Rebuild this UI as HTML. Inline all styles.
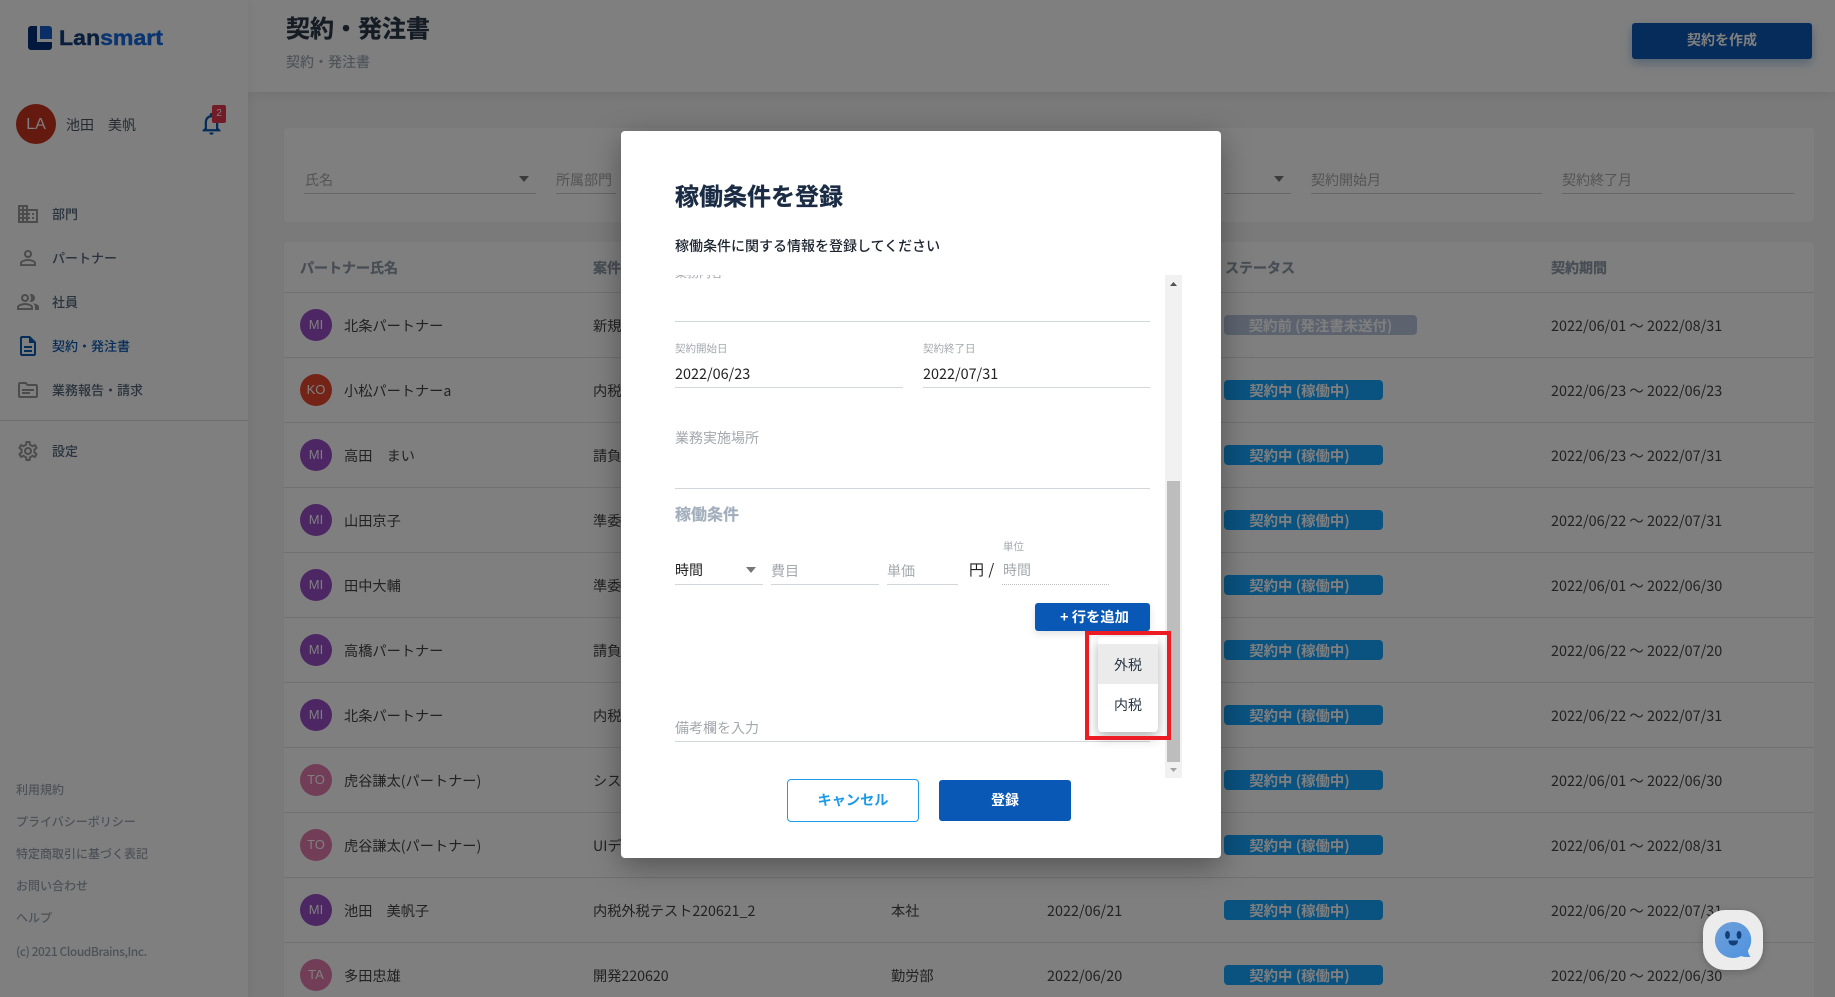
<!DOCTYPE html>
<html lang="ja"><head><meta charset="utf-8"><title>契約・発注書</title>
<style>
*{box-sizing:border-box}
html,body{margin:0;padding:0;width:1835px;height:997px;overflow:hidden}
body{position:relative;background:#f5f5f5;font-family:"Liberation Sans","Noto Sans CJK JP",sans-serif;color:#444}
#w{position:absolute;left:0;top:0;width:1835px;height:997px;overflow:hidden}
.t{position:absolute;white-space:nowrap;line-height:20px;font-family:"Noto Sans CJK JP","Liberation Sans",sans-serif;font-size:14px}
.b{font-weight:700}
.box{position:absolute}
.line{position:absolute;height:1px}
svg{position:absolute;display:block}
.side{position:absolute;left:0;top:0;width:248px;height:997px;background:#fff;box-shadow:0 0 12px rgba(0,0,0,.08)}
.head{position:absolute;left:248px;top:0;width:1587px;height:92px;background:#fff;box-shadow:0 2px 12px rgba(0,0,0,.08)}
.card{position:absolute;left:284px;width:1530px;background:#fff;border-radius:4px}
.m{color:#55667a;font-size:13px;font-weight:500;left:52px}
.f{color:#9ca5b1;font-size:12px;font-weight:500;left:16px}
.fl{color:#a8a8a8}
.av{position:absolute;left:300px;width:32px;height:32px;border-radius:50%;color:#fff;font-size:13px;line-height:32px;text-align:center;font-family:"Liberation Sans",sans-serif}
.mi{background:#9a4cc8}.to{background:#e47cae}
.n{left:344px;color:#444;font-size:14.200px}
.c{left:593px;color:#444;font-size:14.200px}
.p{left:1551px;color:#444;font-size:14.400px}
.s{position:absolute;left:1224px;width:159px;height:20px;border-radius:4px;background:#14a4ff;color:#fff;font-weight:700;font-size:14.400px;line-height:21px;text-align:center;padding-right:8px;font-family:"Noto Sans CJK JP",sans-serif}
.ov{position:absolute;left:0;top:0;width:1835px;height:997px;background:rgba(0,0,0,.5)}
.modal{position:absolute;left:621px;top:131px;width:600px;height:727px;background:#fff;border-radius:4px;box-shadow:0 8px 30px rgba(0,0,0,.35)}
.ul{position:absolute;height:1px;background:#d2d7dc}
.g{color:#a4a8ad}
.th{color:#8f9ba8;-webkit-text-stroke:.25px #8f9ba8}
</style></head><body><div id="w">

<div class="head"></div>
<div class="side"></div>

<!-- logo -->
<svg style="left:28px;top:26px" width="24" height="24" viewBox="0 0 24 24"><path d="M3 0H9V16H24V21a3 3 0 0 1-3 3H3a3 3 0 0 1-3-3V3a3 3 0 0 1 3-3z" fill="#04307a"/><path d="M12 0H21a3 3 0 0 1 3 3V13H12z" fill="#145ecc"/></svg>
<div style="position:absolute;left:59px;top:26px;font:700 21px/26px 'Liberation Sans',sans-serif;color:#143e7a;-webkit-text-stroke:.4px #143e7a;transform:scaleX(1.1);transform-origin:0 0;white-space:nowrap">Lan<span style="color:#146ae0;-webkit-text-stroke:.4px #146ae0">smart</span></div>

<!-- user -->
<div class="box" style="left:16px;top:104px;width:40px;height:40px;border-radius:50%;background:#ca3420;color:#fff;text-align:center;line-height:42px;font-size:16px">LA</div>
<div class="t" style="left:66px;top:115px;color:#4a5563">池田　美帆</div>
<svg style="left:198px;top:110px" width="27" height="27" viewBox="0 0 24 24"><path d="M12 22c1.1 0 2-.9 2-2h-4c0 1.1.9 2 2 2zm6-6v-5c0-3.07-1.63-5.64-4.5-6.32V4c0-.83-.67-1.5-1.5-1.5s-1.5.67-1.5 1.5v.68C7.64 5.36 6 7.92 6 11v5l-2 2v1h16v-1l-2-2zm-2 1H8v-6c0-2.48 1.51-4.5 4-4.5s4 2.02 4 4.5v6z" fill="#0b5ab5"/></svg>
<div class="box" style="left:212px;top:105px;width:14px;height:18px;border-radius:2px;background:#e63950;color:#fff;font-size:10px;line-height:18px;text-align:center">2</div>

<!-- menu -->
<svg style="left:16px;top:202px" width="24" height="24" viewBox="0 0 24 24"><path fill="#999" d="M12 7V3H2v18h20V7H12zM6 19H4v-2h2v2zm0-4H4v-2h2v2zm0-4H4V9h2v2zm0-4H4V5h2v2zm4 12H8v-2h2v2zm0-4H8v-2h2v2zm0-4H8V9h2v2zm0-4H8V5h2v2zm10 12h-8v-2h2v-2h-2v-2h2v-2h-2V9h8v10zm-2-8h-2v2h2v-2zm0 4h-2v2h2v-2z"/></svg>
<div class="t m" style="top:204px">部門</div>
<svg style="left:16px;top:246px" width="24" height="24" viewBox="0 0 24 24"><path fill="#999" d="M12 5.900c1.160 0 2.100.940 2.100 2.100s-.940 2.100-2.100 2.100S9.900 9.160 9.900 8s.940-2.100 2.100-2.100m0 9c2.970 0 6.100 1.460 6.100 2.100v1.100H5.900V17c0-.640 3.130-2.100 6.100-2.100M12 4C9.790 4 8 5.790 8 8s1.790 4 4 4 4-1.790 4-4-1.790-4-4-4zm0 9c-2.670 0-8 1.340-8 4v3h16v-3c0-2.660-5.330-4-8-4z"/></svg>
<div class="t m" style="top:248px">パートナー</div>
<svg style="left:16px;top:290px" width="24" height="24" viewBox="0 0 24 24"><path fill="#999" d="M16.67 13.13C18.04 14.06 19 15.32 19 17v3h4v-3c0-2.18-3.57-3.47-6.33-3.87zM15 12c2.21 0 4-1.79 4-4s-1.79-4-4-4c-.47 0-.91.1-1.33.24C14.5 5.27 15 6.58 15 8s-.5 2.73-1.33 3.76c.42.14.86.24 1.33.24zM9 12c2.21 0 4-1.79 4-4s-1.79-4-4-4-4 1.79-4 4 1.79 4 4 4zm0-6c1.1 0 2 .9 2 2s-.9 2-2 2-2-.9-2-2 .9-2 2-2zM9 13c-2.67 0-8 1.34-8 4v3h16v-3c0-2.66-5.33-4-8-4zm6 5H3v-.99C3.2 16.29 6.3 15 9 15s5.8 1.29 6 2v1z"/></svg>
<div class="t m" style="top:292px">社員</div>
<svg style="left:16px;top:334px" width="24" height="24" viewBox="0 0 24 24"><path fill="#0b5ab5" d="M8 16h8v2H8zm0-4h8v2H8zm6-10H6c-1.1 0-2 .9-2 2v16c0 1.1.89 2 1.99 2H18c1.1 0 2-.9 2-2V8l-6-6zm4 18H6V4h7v5h5v11z"/></svg>
<div class="t m" style="top:336px;color:#0b5ab5">契約・発注書</div>
<svg style="left:16px;top:378px" width="24" height="24" viewBox="0 0 24 24"><path fill="#999" d="M20 6h-8l-2-2H4c-1.1 0-1.99.9-1.99 2L2 18c0 1.1.9 2 2 2h16c1.1 0 2-.9 2-2V8c0-1.1-.9-2-2-2zm0 12H4V6h5.17l2 2H20v10zM6 11h12v2H6zm0 3h8v2H6z"/></svg>
<div class="t m" style="top:380px">業務報告・請求</div>
<div class="line" style="left:0;top:420px;width:248px;background:#ddd"></div>
<svg style="left:16px;top:439px" width="24" height="24" viewBox="0 0 24 24"><path fill="#999" d="M19.43 12.98c.04-.32.07-.64.07-.98 0-.34-.03-.66-.07-.98l2.11-1.65c.19-.15.24-.42.12-.64l-2-3.46c-.09-.16-.26-.25-.44-.25-.06 0-.12.01-.17.03l-2.49 1c-.52-.4-1.08-.73-1.69-.98l-.38-2.65C14.46 2.18 14.25 2 14 2h-4c-.25 0-.46.18-.49.42l-.38 2.65c-.61.25-1.17.59-1.69.98l-2.49-1c-.06-.02-.12-.03-.18-.03-.17 0-.34.09-.43.25l-2 3.46c-.13.22-.07.49.12.64l2.11 1.65c-.04.32-.07.65-.07.98 0 .33.03.66.07.98l-2.11 1.65c-.19.15-.24.42-.12.64l2 3.46c.09.16.26.25.44.25.06 0 .12-.01.17-.03l2.49-1c.52.4 1.08.73 1.69.98l.38 2.65c.03.24.24.42.49.42h4c.25 0 .46-.18.49-.42l.38-2.65c.61-.25 1.17-.59 1.69-.98l2.49 1c.06.02.12.03.18.03.17 0 .34-.09.43-.25l2-3.46c.12-.22.07-.49-.12-.64l-2.11-1.65zm-1.98-1.71c.04.31.05.52.05.73 0 .21-.02.43-.05.73l-.14 1.13.89.7 1.08.84-.7 1.21-1.27-.51-1.04-.42-.9.68c-.43.32-.84.56-1.25.73l-1.06.43-.16 1.13-.2 1.35h-1.4l-.19-1.35-.16-1.13-1.06-.43c-.43-.18-.83-.41-1.23-.71l-.91-.7-1.06.43-1.27.51-.7-1.21 1.08-.84.89-.7-.14-1.13c-.03-.31-.05-.54-.05-.74s.02-.43.05-.73l.14-1.13-.89-.7-1.08-.84.7-1.21 1.27.51 1.04.42.9-.68c.43-.32.84-.56 1.25-.73l1.06-.43.16-1.13.2-1.35h1.39l.19 1.35.16 1.13 1.06.43c.43.18.83.41 1.23.71l.91.7 1.06-.43 1.27-.51.7 1.21-1.07.85-.89.7.14 1.13zM12 8c-2.21 0-4 1.79-4 4s1.79 4 4 4 4-1.79 4-4-1.79-4-4-4zm0 6c-1.1 0-2-.9-2-2s.9-2 2-2 2 .9 2 2-.9 2-2 2z"/></svg>
<div class="t m" style="top:441px">設定</div>

<!-- footer -->
<div class="t f" style="top:780px">利用規約</div>
<div class="t f" style="top:812px">プライバシーポリシー</div>
<div class="t f" style="top:844px">特定商取引に基づく表記</div>
<div class="t f" style="top:876px">お問い合わせ</div>
<div class="t f" style="top:908px">ヘルプ</div>
<div class="t f" style="top:942px;letter-spacing:-.45px">(c) 2021 CloudBrains,Inc.</div>

<!-- header -->
<div class="t b" style="left:286px;top:12px;font-size:24px;line-height:30px;color:#2a3848;-webkit-text-stroke:.3px #2a3848">契約・発注書</div>
<div class="t" style="left:286px;top:52px;color:#a2aab6;font-weight:500">契約・発注書</div>
<div class="box" style="left:1632px;top:23px;width:180px;height:36px;border-radius:3px;background:#0a58b5;box-shadow:0 4px 10px rgba(10,88,181,.35);color:#fff;font:700 14px/34px 'Noto Sans CJK JP',sans-serif;text-align:center">契約を作成</div>

<!-- filter -->
<div class="card" style="top:128px;height:94px"></div>
<div class="t fl" style="left:305px;top:170px">氏名</div>
<svg style="left:518px;top:176px" width="12" height="6" viewBox="0 0 12 6"><path d="M1 0h10L6 6z" fill="#777"/></svg>
<div class="line" style="left:304px;top:193px;width:232px;background:#ccc"></div>
<div class="t fl" style="left:556px;top:170px">所属部門</div>
<div class="line" style="left:556px;top:193px;width:60px;background:#ccc"></div>
<svg style="left:1273px;top:176px" width="12" height="6" viewBox="0 0 12 6"><path d="M1 0h10L6 6z" fill="#777"/></svg>
<div class="line" style="left:1225px;top:193px;width:66px;background:#ccc"></div>
<div class="t fl" style="left:1311px;top:170px">契約開始月</div>
<div class="line" style="left:1311px;top:193px;width:231px;background:#ccc"></div>
<div class="t fl" style="left:1562px;top:170px">契約終了月</div>
<div class="line" style="left:1562px;top:193px;width:232px;background:#ccc"></div>

<!-- table -->
<div class="card" style="top:242px;height:755px;border-radius:4px 4px 0 0"></div>
<div class="t b th" style="left:300px;top:258px">パートナー氏名</div>
<div class="t b th" style="left:593px;top:258px">案件</div>
<div class="t b th" style="left:1225px;top:258px">ステータス</div>
<div class="t b th" style="left:1551px;top:258px">契約期間</div>
<div class="line" style="left:284px;top:292px;width:1530px;background:#e3e3e3"></div>
<div class="line" style="left:284px;top:357px;width:1530px;background:#e3e3e3"></div>
<div class="line" style="left:284px;top:422px;width:1530px;background:#e3e3e3"></div>
<div class="line" style="left:284px;top:487px;width:1530px;background:#e3e3e3"></div>
<div class="line" style="left:284px;top:552px;width:1530px;background:#e3e3e3"></div>
<div class="line" style="left:284px;top:617px;width:1530px;background:#e3e3e3"></div>
<div class="line" style="left:284px;top:682px;width:1530px;background:#e3e3e3"></div>
<div class="line" style="left:284px;top:747px;width:1530px;background:#e3e3e3"></div>
<div class="line" style="left:284px;top:812px;width:1530px;background:#e3e3e3"></div>
<div class="line" style="left:284px;top:877px;width:1530px;background:#e3e3e3"></div>
<div class="line" style="left:284px;top:942px;width:1530px;background:#e3e3e3"></div>

<div class="av mi" style="top:309px">MI</div><div class="t n" style="top:316px">北条パートナー</div><div class="t c" style="top:316px">新規</div>
<div class="s" style="top:315px;width:193px;background:#b8c6de;padding-right:0">契約前 (発注書未送付)</div><div class="t p" style="top:316px">2022/06/01 ～ 2022/08/31</div>

<div class="av" style="top:374px;background:#e8482f">KO</div><div class="t n" style="top:381px">小松パートナーa</div><div class="t c" style="top:381px">内税</div>
<div class="s" style="top:380px">契約中 (稼働中)</div><div class="t p" style="top:381px">2022/06/23 ～ 2022/06/23</div>

<div class="av mi" style="top:439px">MI</div><div class="t n" style="top:446px">高田　まい</div><div class="t c" style="top:446px">請負</div>
<div class="s" style="top:445px">契約中 (稼働中)</div><div class="t p" style="top:446px">2022/06/23 ～ 2022/07/31</div>

<div class="av mi" style="top:504px">MI</div><div class="t n" style="top:511px">山田京子</div><div class="t c" style="top:511px">準委</div>
<div class="s" style="top:510px">契約中 (稼働中)</div><div class="t p" style="top:511px">2022/06/22 ～ 2022/07/31</div>

<div class="av mi" style="top:569px">MI</div><div class="t n" style="top:576px">田中大輔</div><div class="t c" style="top:576px">準委</div>
<div class="s" style="top:575px">契約中 (稼働中)</div><div class="t p" style="top:576px">2022/06/01 ～ 2022/06/30</div>

<div class="av mi" style="top:634px">MI</div><div class="t n" style="top:641px">高橋パートナー</div><div class="t c" style="top:641px">請負</div>
<div class="s" style="top:640px">契約中 (稼働中)</div><div class="t p" style="top:641px">2022/06/22 ～ 2022/07/20</div>

<div class="av mi" style="top:699px">MI</div><div class="t n" style="top:706px">北条パートナー</div><div class="t c" style="top:706px">内税</div>
<div class="s" style="top:705px">契約中 (稼働中)</div><div class="t p" style="top:706px">2022/06/22 ～ 2022/07/31</div>

<div class="av to" style="top:764px">TO</div><div class="t n" style="top:771px">虎谷謙太(パートナー)</div><div class="t c" style="top:771px">シス</div>
<div class="s" style="top:770px">契約中 (稼働中)</div><div class="t p" style="top:771px">2022/06/01 ～ 2022/06/30</div>

<div class="av to" style="top:829px">TO</div><div class="t n" style="top:836px">虎谷謙太(パートナー)</div><div class="t c" style="top:836px">UIデ</div>
<div class="s" style="top:835px">契約中 (稼働中)</div><div class="t p" style="top:836px">2022/06/01 ～ 2022/08/31</div>

<div class="av mi" style="top:894px">MI</div><div class="t n" style="top:901px">池田　美帆子</div><div class="t c" style="top:901px">内税外税テスト220621_2</div>
<div class="t" style="left:891px;top:901px;font-size:14.200px">本社</div><div class="t" style="left:1047px;top:901px;font-size:14.400px">2022/06/21</div>
<div class="s" style="top:900px">契約中 (稼働中)</div><div class="t p" style="top:901px">2022/06/20 ～ 2022/07/31</div>

<div class="av to" style="top:959px">TA</div><div class="t n" style="top:966px">多田忠雄</div><div class="t c" style="top:966px">開発220620</div>
<div class="t" style="left:891px;top:966px;font-size:14.200px">勤労部</div><div class="t" style="left:1047px;top:966px;font-size:14.400px">2022/06/20</div>
<div class="s" style="top:965px">契約中 (稼働中)</div><div class="t p" style="top:966px">2022/06/20 ～ 2022/06/30</div>

<div class="ov"></div>

<!-- chat widget -->
<div class="box" style="left:1703px;top:910px;width:60px;height:60px;border-radius:22px;background:#ececec;box-shadow:0 2px 8px rgba(0,0,0,.2)"></div>
<svg style="left:1703px;top:910px" width="60" height="60" viewBox="0 0 60 60">
<defs><linearGradient id="bg" x1="0" y1="0" x2="1" y2="1"><stop offset="0" stop-color="#6f9fd8"/><stop offset="1" stop-color="#4f93e0"/></linearGradient></defs>
<path d="M30 12a18 18 0 1 0 8 34.100c3 .9 6 1 9.500.8-1.500-1.900-2.300-4-2.600-6.500A18 18 0 0 0 30 12z" fill="url(#bg)"/>
<ellipse cx="24.500" cy="25" rx="2.400" ry="4" fill="#123f78"/><ellipse cx="36" cy="25" rx="2.400" ry="4" fill="#123f78"/>
<path d="M25.500 30.500h9.500c0 3.200-2 5-4.750 5S25.500 33.700 25.500 30.500z" fill="#123f78"/></svg>

<!-- modal -->
<div class="modal"></div>
<div class="t b" style="left:675px;top:179px;font-size:24px;line-height:32px;color:#1a2b44;-webkit-text-stroke:.3px #1a2b44">稼働条件を登録</div>
<div class="t" style="left:675px;top:236px;color:#1c2430;font-weight:500">稼働条件に関する情報を登録してください</div>

<!-- scroll area -->
<div class="box" style="left:675px;top:275px;width:490px;height:503px;overflow:hidden">
  <div class="t g" style="left:0;top:-12px;font-size:12px">業務内容</div>
</div>
<div class="ul" style="left:675px;top:321px;width:475px"></div>
<div class="t g" style="left:675px;top:339px;font-size:10.500px">契約開始日</div>
<div class="t" style="left:675px;top:364px;color:#222;font-size:14.400px">2022/06/23</div>
<div class="ul" style="left:675px;top:387px;width:228px"></div>
<div class="t g" style="left:923px;top:339px;font-size:10.500px">契約終了日</div>
<div class="t" style="left:923px;top:364px;color:#222;font-size:14.400px">2022/07/31</div>
<div class="ul" style="left:923px;top:387px;width:227px"></div>
<div class="t g" style="left:675px;top:428px">業務実施場所</div>
<div class="ul" style="left:675px;top:488px;width:475px"></div>
<div class="t b" style="left:675px;top:503px;font-size:16px;color:#a3afbd;-webkit-text-stroke:.2px #a3afbd">稼働条件</div>
<div class="t g" style="left:1003px;top:537px;font-size:10.500px">単位</div>
<div class="t" style="left:675px;top:560px;color:#222">時間</div>
<svg style="left:746px;top:567px" width="10" height="6" viewBox="0 0 10 6"><path d="M0 0h10L5 6z" fill="#777"/></svg>
<div class="ul" style="left:675px;top:584px;width:88px"></div>
<div class="t g" style="left:771px;top:561px">費目</div>
<div class="ul" style="left:771px;top:584px;width:108px"></div>
<div class="t g" style="left:887px;top:561px">単価</div>
<div class="ul" style="left:887px;top:584px;width:71px"></div>
<div class="t" style="left:969px;top:560px;color:#222;font-size:15px;word-spacing:1px">円 /</div>
<div class="t g" style="left:1003px;top:560px">時間</div>
<div class="box" style="left:1002px;top:584px;width:107px;border-top:1px dotted #bbb"></div>
<div class="box" style="left:1035px;top:603px;width:115px;height:28px;border-radius:3px;background:#0a58b5;box-shadow:0 3px 8px rgba(0,0,0,.12);color:#fff;font:700 14.300px/28px 'Noto Sans CJK JP',sans-serif;text-align:center;padding-left:4px">+ 行を追加</div>
<div class="t g" style="left:675px;top:718px">備考欄を入力</div>
<div class="ul" style="left:675px;top:741px;width:475px"></div>

<!-- scrollbar -->
<div class="box" style="left:1165px;top:275px;width:17px;height:503px;background:#f1f1f1"></div>
<div class="box" style="left:1167px;top:481px;width:13px;height:281px;background:#bdbdbd"></div>
<svg style="left:1169px;top:281px" width="9" height="6" viewBox="0 0 9 6"><path d="M4.500 1L8 5H1z" fill="#505050"/></svg>
<svg style="left:1169px;top:767px" width="9" height="6" viewBox="0 0 9 6"><path d="M1 1h7L4.500 5z" fill="#a3a3a3"/></svg>

<!-- dropdown -->
<div class="box" style="left:1098px;top:637px;width:60px;height:95px;border-radius:4px;background:#fff;box-shadow:0 5px 12px rgba(0,0,0,.3)"></div>
<div class="box" style="left:1098px;top:644px;width:60px;height:40px;background:#ebebeb"></div>
<div class="t" style="left:1098px;top:655px;width:60px;text-align:center;color:#2a3644">外税</div>
<div class="t" style="left:1098px;top:695px;width:60px;text-align:center;color:#2a3644">内税</div>
<div class="box" style="left:1085px;top:631px;width:86px;height:109px;border:4.500px solid #ed1c24"></div>

<!-- buttons -->
<div class="box" style="left:787px;top:779px;width:132px;height:43px;border:1px solid #1e9be8;border-radius:4px;background:#fff;color:#1e9be8;font:700 14.200px/41px 'Noto Sans CJK JP',sans-serif;text-align:center">キャンセル</div>
<div class="box" style="left:939px;top:780px;width:132px;height:41px;border-radius:3px;background:#0a58b5;color:#fff;font:700 14px/41px 'Noto Sans CJK JP',sans-serif;text-align:center">登録</div>

</div></body></html>
